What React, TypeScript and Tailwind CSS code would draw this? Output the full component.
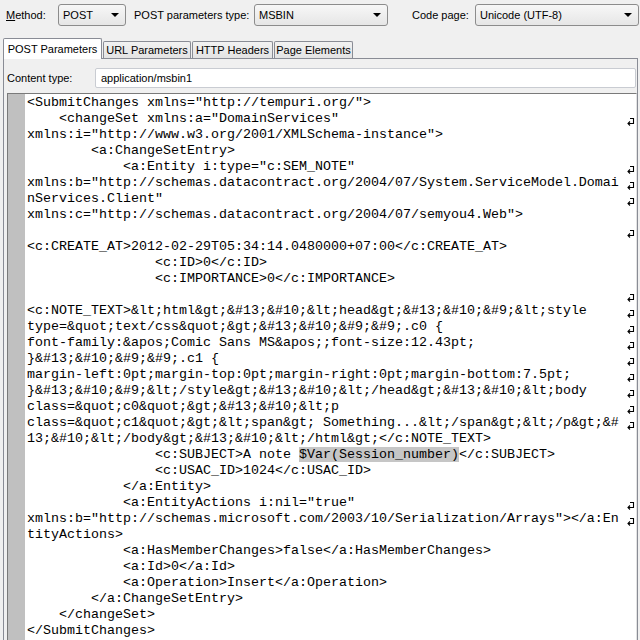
import React from "react"

type Line = { text: React.ReactNode; wrap?: boolean }

const code: Line[] = [
  { text: '<SubmitChanges xmlns="http://tempuri.org/">' },
  { text: '    <changeSet xmlns:a="DomainServices"', wrap: true },
  { text: 'xmlns:i="http://www.w3.org/2001/XMLSchema-instance">' },
  { text: "        <a:ChangeSetEntry>" },
  { text: '            <a:Entity i:type="c:SEM_NOTE"', wrap: true },
  { text: 'xmlns:b="http://schemas.datacontract.org/2004/07/System.ServiceModel.Domai', wrap: true },
  { text: 'nServices.Client"', wrap: true },
  { text: 'xmlns:c="http://schemas.datacontract.org/2004/07/semyou4.Web">' },
  { text: "", wrap: true },
  { text: "<c:CREATE_AT>2012-02-29T05:34:14.0480000+07:00</c:CREATE_AT>" },
  { text: "                <c:ID>0</c:ID>" },
  { text: "                <c:IMPORTANCE>0</c:IMPORTANCE>" },
  { text: "", wrap: true },
  { text: "<c:NOTE_TEXT>&lt;html&gt;&#13;&#10;&lt;head&gt;&#13;&#10;&#9;&lt;style", wrap: true },
  { text: "type=&quot;text/css&quot;&gt;&#13;&#10;&#9;&#9;.c0 {", wrap: true },
  { text: "font-family:&apos;Comic Sans MS&apos;;font-size:12.43pt;", wrap: true },
  { text: "}&#13;&#10;&#9;&#9;.c1 {", wrap: true },
  { text: "margin-left:0pt;margin-top:0pt;margin-right:0pt;margin-bottom:7.5pt;", wrap: true },
  { text: "}&#13;&#10;&#9;&lt;/style&gt;&#13;&#10;&lt;/head&gt;&#13;&#10;&lt;body", wrap: true },
  { text: "class=&quot;c0&quot;&gt;&#13;&#10;&lt;p", wrap: true },
  { text: "class=&quot;c1&quot;&gt;&lt;span&gt; Something...&lt;/span&gt;&lt;/p&gt;&#", wrap: true },
  { text: "13;&#10;&lt;/body&gt;&#13;&#10;&lt;/html&gt;</c:NOTE_TEXT>" },
  {
    text: (
      <>
        {"                <c:SUBJECT>A note "}
        <span className="bg-[#c6c6c6]">$Var(Session_number)</span>
        {"</c:SUBJECT>"}
      </>
    ),
  },
  { text: "                <c:USAC_ID>1024</c:USAC_ID>" },
  { text: "            </a:Entity>" },
  { text: '            <a:EntityActions i:nil="true"', wrap: true },
  { text: 'xmlns:b="http://schemas.microsoft.com/2003/10/Serialization/Arrays"></a:En', wrap: true },
  { text: "tityActions>" },
  { text: "            <a:HasMemberChanges>false</a:HasMemberChanges>" },
  { text: "            <a:Id>0</a:Id>" },
  { text: "            <a:Operation>Insert</a:Operation>" },
  { text: "        </a:ChangeSetEntry>" },
  { text: "    </changeSet>" },
  { text: "</SubmitChanges>" },
]

function Combo({ className, value }: { className: string; value: string }) {
  return (
    <div
      className={`${className} h-[22px] flex items-center justify-between pl-[4px] pr-[6px] border border-[#8c8c8c] rounded-[3px] bg-gradient-to-b from-[#f7f7f7] to-[#e6e6e6]`}
    >
      <span>{value}</span>
      <span className="w-0 h-0 border-l-[4px] border-r-[4px] border-t-[4px] border-l-transparent border-r-transparent border-t-black" />
    </div>
  )
}

function WrapMark() {
  return (
    <svg width="8" height="9" viewBox="0 0 8 9" className="mt-[6px]" fill="none" stroke="#000" strokeWidth="1.1">
      <path d="M3 1.5H6.5V6.5H1" />
      <path d="M3 4.5L1 6.5L3 8.5" />
    </svg>
  )
}

export default function App() {
  const tabs = [
    { label: "URL Parameters", w: "w-[88px]" },
    { label: "HTTP Headers", w: "w-[81px]" },
    { label: "Page Elements", w: "w-[79px]" },
  ]

  return (
    <div className="w-[640px] h-[640px] overflow-hidden flex flex-col bg-[#f0f0f0] text-[11px] leading-none text-black font-['Liberation_Sans',sans-serif]">
      {/* toolbar */}
      <div className="flex items-center h-[22px] mt-[4px]">
        <span className="ml-[6px] w-[52px]">
          <span className="underline">M</span>ethod:
        </span>
        <Combo className="w-[68px]" value="POST" />
        <span className="ml-[8px] w-[120px]">POST parameters type:</span>
        <Combo className="w-[134px]" value="MSBIN" />
        <span className="ml-[24px] w-[63px]">Code page:</span>
        <Combo className="w-[164px]" value="Unicode (UTF-8)" />
      </div>

      {/* tabs */}
      <div className="flex items-end h-[20px] mt-[12px] pl-[3px]">
        <div className="relative z-10 -mb-px w-[99px] h-[21px] flex items-center justify-center bg-white border border-b-0 border-[#898c95] rounded-t-[2px]">
          POST Parameters
        </div>
        {tabs.map((t) => (
          <div
            key={t.label}
            className={`${t.w} ml-px h-[17px] flex items-center justify-center border border-b-0 border-[#898c95] rounded-t-[2px] bg-gradient-to-b from-[#f2f2f2] to-[#e3e3e3]`}
          >
            {t.label}
          </div>
        ))}
      </div>

      {/* panel */}
      <div className="flex-1 min-h-0 ml-[3px] w-[635px] flex flex-col border border-b-0 border-[#898c95] pl-[3px]">
        <div className="flex items-center mt-[9px] h-[20px]">
          <span className="w-[88px]">Content type:</span>
          <div className="flex-1 h-[20px] mr-px flex items-center pl-[5px] bg-white border border-[#c9ccd2] rounded-[2px]">
            application/msbin1
          </div>
        </div>

        <div className="flex-1 min-h-0 mt-[5px] flex border-t border-l border-r border-t-[#7a7a7a] border-l-[#7a7a7a] border-r-[#e3e3e3]">
          <div className="w-[17px] bg-[#c0c0c0]" />
          <div className="flex-1 bg-white pl-[2px] pt-[1px] font-['Liberation_Mono',monospace] text-[13.333px] leading-[16px]">
            {code.map((l, i) => (
              <div key={i} className="flex h-[16px]">
                <span className="w-[600px] whitespace-pre">{l.text}</span>
                {l.wrap && <WrapMark />}
              </div>
            ))}
          </div>
        </div>
      </div>
    </div>
  )
}
